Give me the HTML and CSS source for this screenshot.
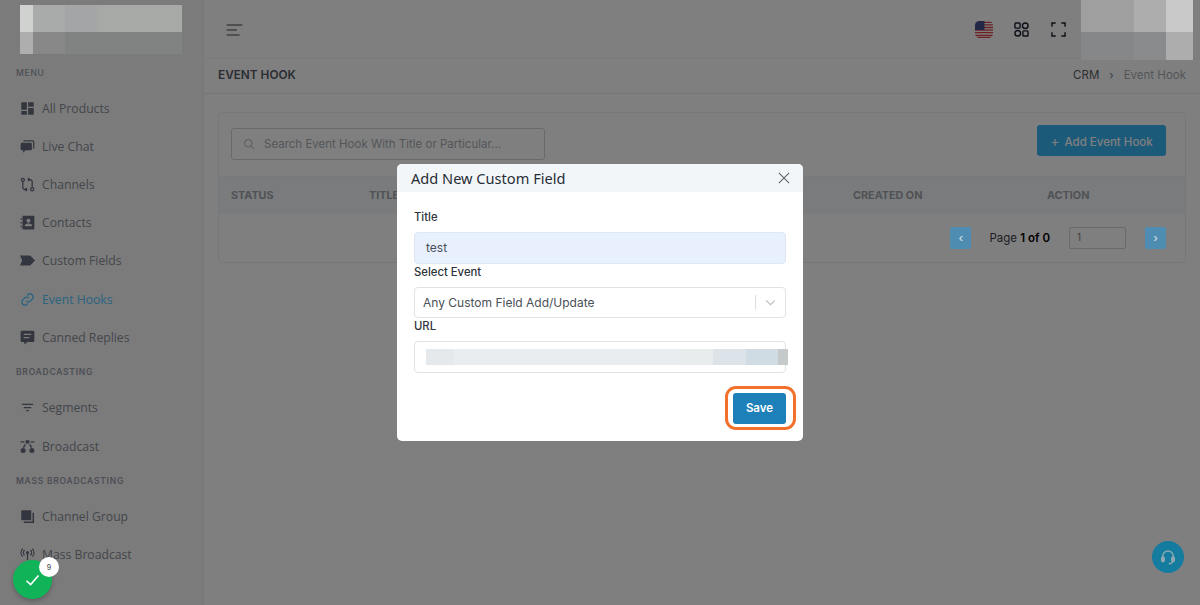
FILE: index.html
```html
<!DOCTYPE html>
<html lang="en">
<head>
<meta charset="utf-8">
<title>Event Hook</title>
<link rel="stylesheet" href="styles.css">
</head>
<body>
<div class="app">
  <aside class="sidebar">
    <div class="logo"><i class="b1"></i><i class="b2"></i><i class="b3"></i><i class="b4"></i><i class="b5"></i><i class="b6"></i><i class="b7"></i><i class="b8"></i></div>
    <div class="sec first">MENU</div>
    <a class="item"><svg viewBox="0 0 24 24"><path d="M2 2h9v12H2zM13 2h9v7h-9zM13 11h9v11h-9zM2 16h9v6H2z"/></svg>All Products</a>
    <a class="item"><svg viewBox="0 0 24 24"><path d="M7 2h13a3 3 0 0 1 3 3v9a2 2 0 0 1-2 2V5a1 1 0 0 0-1-1H5a2 2 0 0 1 2-2zM3 6h14a2 2 0 0 1 2 2v8a2 2 0 0 1-2 2H9l-4 4v-4H3a2 2 0 0 1-2-2V8a2 2 0 0 1 2-2z"/></svg>Live Chat</a>
    <a class="item"><svg viewBox="0 0 24 24" class="ol"><circle cx="4.500" cy="4.500" r="2.500"/><circle cx="19.500" cy="19.500" r="2.500"/><path d="M4.500 7v9a4 4 0 0 0 4 4h3M11.500 20l-2.500-2.500M11.500 20L9 22.500M19.500 17V8a4 4 0 0 0-4-4h-3M12.500 4L15 1.500M12.500 4L15 6.500"/></svg>Channels</a>
    <a class="item"><svg viewBox="0 0 24 24"><path fill-rule="evenodd" d="M4 1h17a2 2 0 0 1 2 2v18a2 2 0 0 1-2 2H4zM13.500 6a3.200 3.200 0 1 0 0 6.400 3.200 3.200 0 0 0 0-6.400zM7.500 18h12c0-3.500-2.500-4.500-6-4.500s-6 1-6 4.500zM1 5h2v2.500H1zM1 11h2v2.500H1zM1 17h2v2.500H1z"/></svg>Contacts</a>
    <a class="item"><svg viewBox="0 0 24 24"><path d="M0 4h15a3 3 0 0 1 2.500 1.300L24 12l-6.500 6.700A3 3 0 0 1 15 20H0l3.500-8z"/></svg>Custom Fields</a>
    <a class="item active"><svg viewBox="0 0 24 24" class="ol"><path d="M10 14a5 5 0 0 0 7 0l3-3a5 5 0 0 0-7-7l-1.500 1.500"/><path d="M14 10a5 5 0 0 0-7 0l-3 3a5 5 0 0 0 7 7l1.500-1.500"/></svg>Event Hooks</a>
    <a class="item"><svg viewBox="0 0 24 24"><path fill-rule="evenodd" d="M3 1h18a2 2 0 0 1 2 2v14a2 2 0 0 1-2 2h-9l-5 4v-4H3a2 2 0 0 1-2-2V3a2 2 0 0 1 2-2zM6 6v2h12V6zM6 11v2h9v-2z"/></svg>Canned Replies</a>
    <div class="sec">BROADCASTING</div>
    <a class="item"><svg viewBox="0 0 24 24"><path d="M3 6h18v2H3zM6 11h12v2H6zM10 16h4v2h-4z"/></svg>Segments</a>
    <a class="item"><svg viewBox="0 0 24 24"><path d="M9 2h6v5H9zM1 3.500h6v2H1zM17 3.500h6v2h-6zM7.500 8l2 1.200-3 5-2-1.200zM16.500 8l3 5-2 1.200-3-5z"/><circle cx="5" cy="18.500" r="4"/><circle cx="19" cy="18.500" r="4"/></svg>Broadcast</a>
    <div class="sec">MASS BROADCASTING</div>
    <a class="item"><svg viewBox="0 0 24 24"><path d="M2 2h16v16H2zM20 6h2.500v16.500H6V20h14z"/></svg>Channel Group</a>
    <a class="item"><svg viewBox="0 0 24 24"><circle cx="12" cy="9" r="2.500"/><path d="M11 11h2v10h-2zM6.500 4 8 5.500a5 5 0 0 0 0 7L6.500 14a7 7 0 0 1 0-10zM17.500 4 16 5.500a5 5 0 0 1 0 7l1.500 1.500a7 7 0 0 0 0-10zM3.500 2 5 3a9 9 0 0 0 0 12l-1.500 1a11 11 0 0 1 0-14zM20.500 2 19 3a9 9 0 0 1 0 12l1.500 1a11 11 0 0 0 0-14z"/></svg>Mass Broadcast</a>
  </aside>
  <main class="main">
    <header class="topbar">
      <svg class="burger" viewBox="0 0 18 13"><path d="M0 1h17M0 6.500h11M0 12h14"/></svg>
      <div class="top-right">
        <svg class="flag" viewBox="0 0 18 17"><defs><clipPath id="fc"><rect width="18" height="17" rx="4.500"/></clipPath></defs><g clip-path="url(#fc)"><rect width="18" height="17" fill="#fff"/><path d="M0 1.300h18M0 3.900h18M0 6.500h18M0 9.100h18M0 11.700h18M0 14.300h18M0 16.500h18" stroke="#d8434c" stroke-width="1.300"/><rect width="9.500" height="9" fill="#46508f"/></g></svg>
        <svg class="ticon grid" viewBox="0 0 16 16"><rect x="1" y="1" width="5.500" height="5.500" rx="1"/><circle cx="12" cy="4" r="3"/><circle cx="4" cy="12" r="3"/><rect x="9.500" y="9.500" width="5.500" height="5.500" rx="1"/></svg>
        <svg class="ticon full" viewBox="0 0 16 16"><path d="M1 5V1h4M11 1h4v4M15 11v4h-4M5 15H1v-4"/></svg>
        <div class="profile"><i class="p1"></i><i class="p2"></i><i class="p3"></i><i class="p4"></i><i class="p5"></i><i class="p6"></i></div>
      </div>
    </header>
    <div class="titlebar">
      <h1>EVENT HOOK</h1>
      <div class="crumb"><span class="c1">CRM</span><span class="sep">›</span><span class="c2">Event Hook</span></div>
    </div>
    <section class="card">
      <div class="toolbar">
        <div class="search"><svg viewBox="0 0 16 16"><circle cx="7" cy="7" r="5"/><path d="M11 11l3.500 3.500"/></svg><span>Search Event Hook With Title or Particular...</span></div>
        <button class="add"><span class="plus">+</span>Add Event Hook</button>
      </div>
      <div class="thead"><span>STATUS</span><span>TITLE</span><span>CREATED ON</span><span>ACTION</span></div>
      <div class="pager">
        <button class="pg">‹</button>
        <span class="pinfo">Page <b>1 of 0</b></span>
        <span class="pinput">1</span>
        <button class="pg">›</button>
      </div>
    </section>
  </main>
</div>
<div class="overlay">
  <div class="modal">
    <div class="mhead"><h2>Add New Custom Field</h2><svg viewBox="0 0 14 14"><path d="M1 1l12 12M13 1L1 13"/></svg></div>
    <div class="mbody">
      <label class="lab">Title</label>
      <div class="field filled">test</div>
      <label class="lab">Select Event</label>
      <div class="field select"><span>Any Custom Field Add/Update</span><span class="divider"></span><svg viewBox="0 0 12 8"><path d="M1 1.500l5 5 5-5"/></svg></div>
      <label class="lab">URL</label>
      <div class="field url"><i class="u1"></i><i class="u2"></i><i class="u3"></i><i class="u4"></i><i class="u5"></i><i class="u6"></i></div>
      <div class="mfoot"><span class="ring"><button class="save">Save</button></span></div>
    </div>
  </div>
</div>
<div class="support"><svg viewBox="0 0 24 24"><path d="M5 14v-3a7 7 0 0 1 14 0v3M13 21c3 0 5-1 6-4"/><rect x="3.500" y="12" width="3.500" height="6" rx="1.500"/><rect x="17" y="12" width="3.500" height="6" rx="1.500"/></svg></div>
<div class="check"><svg viewBox="0 0 20 16"><path d="M2 9l5.500 5L18 2"/></svg><span class="badge">9</span></div>
</body>
</html>
```
FILE: styles.css
```css
* { box-sizing: border-box; }
html, body { margin: 0; height: 100%; overflow: hidden; }
body { font-family: "Inter", "Liberation Sans", sans-serif; background: #fff; color: #495057; }
.app { display: flex; height: 605px; }

.sidebar { width: 204px; flex: none; background: #f6f7f9; border-right: 1px solid #eef0f2; padding: 5px 0 0 16px; }
.logo { position: relative; z-index: 1; width: 162px; height: 49px; margin-left: 4px; display: grid; grid-template-columns: 13px 32px 32px 85px; grid-template-rows: 27px 22px; }
.logo i { display: block; }
.logo .b1 { background: #d0d2d0; }
.logo .b2 { background: #a9abab; }
.logo .b3 { background: #a3a5a7; }
.logo .b4 { background: #a7a9a7; }
.logo .b5 { background: #aeaeae; }
.logo .b6 { background: #878887; }
.logo .b7 { background: #818383; }
.logo .b8 { background: #818382; }
.sec { font-size: 8.500px; font-weight: 600; letter-spacing: .75px; color: #9a9ea8; height: 12px; line-height: 12px; margin: 10px 0 10.500px; }
.sec.first { margin-top: 13px; margin-bottom: 10px; font-weight: 500; }
.item { display: flex; align-items: center; height: 38.200px; padding-left: 4px; font-family: "Open Sans", sans-serif; font-size: 12.200px; color: #888c95; }
.item svg { width: 15px; height: 15px; margin-right: 7px; flex: none; fill: #666c7e; }
.item svg.ol { fill: none; stroke: #666c7e; stroke-width: 2; }
.item.active { color: #54c8ff; }
.item.active svg.ol { stroke: #54c8ff; }

.main { flex: 1; min-width: 0; background: #fff; }
.topbar { height: 58px; display: flex; align-items: center; justify-content: space-between; padding-left: 22px; }
.burger { width: 18px; height: 12px; margin-top: 1px; fill: none; stroke: #444; stroke-width: 1.100; }
.top-right { display: flex; align-items: center; margin-right: 7px; height: 58px; }
.flag { width: 18px; height: 17px; margin-right: 21px; }
.ticon { width: 15px; height: 15px; fill: none; stroke: #1a2030; stroke-width: 1.500; }
.ticon.grid { margin-right: 22px; }
.ticon.full { margin-right: 15px; }
.profile { position: relative; z-index: 1; width: 112px; height: 60px; align-self: flex-start; display: grid; grid-template-columns: 53px 32px 27px; grid-template-rows: 32px 28px; }
.profile i { display: block; }
.profile .p1 { background: #9f9f9f; }
.profile .p2 { background: #adadad; }
.profile .p3 { background: #c9c9c9; }
.profile .p4 { background: #858789; }
.profile .p5 { background: #8a8b8c; }
.profile .p6 { background: #adadad; }
.titlebar { height: 36px; display: flex; justify-content: space-between; align-items: center; padding: 0 14px 2px 14px; border-top: 1px solid #f4f4f4; border-bottom: 1px solid #ececec; }
.titlebar h1 { margin: 0; font-size: 11.800px; font-weight: 600; color: #555a66; }
.crumb { font-size: 11.500px; display: flex; align-items: center; }
.crumb .c1 { color: #575b62; }
.crumb .sep { margin: 0 10px; color: #70757c; }
.crumb .c2 { color: #a8acb0; }
.card { margin: 18px 14px 0 14px; height: 151px; border: 1px solid #eceef0; border-radius: 4px; }
.toolbar { height: 63px; display: flex; justify-content: space-between; padding: 12px 19px 0 12px; }
.search { width: 314px; height: 32px; margin-top: 3px; border: 1px solid #ced4da; border-radius: 3px; display: flex; align-items: center; padding-left: 11px; font-size: 11.500px; color: #a8acb2; }
.search svg { width: 12px; height: 12px; margin-right: 9px; fill: none; stroke: #a8acb2; stroke-width: 1.200; }
.add { width: 129px; height: 31px; border: 0; border-radius: 3px; background: #2eb0f4; color: #fff; font: 500 11.500px "Inter", sans-serif; padding: 0; opacity: .95; }
.add .plus { font-size: 14px; margin-right: 5px; font-weight: 400; }
.thead { height: 38px; background: #f4f7f9; border-top: 1px solid #eef0f2; display: grid; grid-template-columns: 138px 484px 194px 1fr; padding-left: 12px; align-items: center; font-size: 10.800px; font-weight: 700; color: #a0a4aa; }
.pager { display: flex; justify-content: flex-end; align-items: center; height: 48px; padding: 0 19px 0 0; }
.pg { position: relative; z-index: 1; width: 21px; height: 22px; border: 0; border-radius: 2px; background: #4f8cb2; color: #b8d0dd; font: 700 11px "Inter", sans-serif; padding: 0; }
.pinfo { margin: 0 19px 0 18px; font-size: 11.500px; color: #3c4046; }
.pinfo b { font-weight: 600; color: #000; }
.pinput { width: 57px; height: 22px; margin-right: 19px; border: 1px solid #ced4da; border-radius: 2px; padding: 3px 7px; font-size: 10px; color: #777c84; }

.overlay { position: fixed; inset: 0; background: rgba(0,0,0,.5); display: flex; justify-content: center; align-items: flex-start; padding-top: 164px; }
.modal { width: 406px; height: 277px; background: #fff; border-radius: 5px; overflow: hidden; }
.mhead { height: 28px; background: #f3f6f9; display: flex; align-items: center; justify-content: space-between; padding: 0 13px 0 14px; }
.mhead h2 { margin: 0; font: 400 14.600px "Noto Sans", sans-serif; color: #272d36; }
.mhead svg { width: 12px; height: 12px; fill: none; stroke: #5a6068; stroke-width: 1.200; }
.mbody { padding: 17px 17px 0 17px; }
.lab { display: block; height: 23px; line-height: 17px; font-size: 11.300px; font-weight: 500; color: #2e333a; }
.lab ~ .lab { height: 22px; line-height: 15px; }
.field { height: 31.500px; border: 1px solid #dfe3e8; border-radius: 4px; margin-bottom: 1px; font-size: 12px; color: #495057; display: flex; align-items: center; }
.filled { background: #e8f0fe; padding-left: 11px; border-color: #dde6f3; }
.select { padding-left: 8px; }
.select .divider { width: 1px; height: 15px; background: #dedede; margin-left: auto; }
.select svg { width: 11px; height: 7px; margin: 0 9px; fill: none; stroke: #bbb; stroke-width: 1.200; }
.url { height: 32px; padding: 7px 0 7px 11px; align-items: stretch; }
.url i { display: block; height: 16px; flex: none; }
.url .u1 { width: 28px; background: #e5e9eb; }
.url .u2 { width: 227px; background: #e9edef; }
.url .u3 { width: 32px; background: #e9eced; }
.url .u4 { width: 33px; background: #dde4e9; }
.url .u5 { width: 32px; background: #cfdce4; }
.url .u6 { width: 10px; background: #c6cacb; }
.mfoot { display: flex; justify-content: flex-end; margin-top: 13px; margin-right: -10px; }
.ring { display: flex; align-items: center; width: 71px; height: 44px; border: 3px solid #f2702c; border-radius: 11px; padding-left: 5px; background: #fff; }
.save { width: 53px; height: 31px; border: 0; border-radius: 3px; background: #1e80b8; color: #fff; font: 600 11.500px "Inter", sans-serif; padding: 0; }

.support { position: fixed; left: 1152px; top: 541px; width: 32px; height: 32px; border-radius: 50%; background: #157b9f; display: flex; align-items: center; justify-content: center; }
.support svg { width: 18px; height: 18px; fill: #8fa9b2; stroke: #8fa9b2; stroke-width: 1.800; }
.support svg path { fill: none; }
.check { position: fixed; left: 13px; top: 560px; width: 39px; height: 39px; border-radius: 50%; background: #10b358; display: flex; align-items: center; justify-content: center; box-shadow: 0 2px 5px rgba(0,0,0,.25); }
.check svg { width: 15px; height: 12px; fill: none; stroke: #fff; stroke-width: 2.200; }
.badge { position: absolute; left: 26px; top: -3px; width: 20px; height: 20px; border-radius: 50%; background: #fff; color: #555; font-size: 7px; font-weight: 500; display: flex; align-items: center; justify-content: center; }
```
